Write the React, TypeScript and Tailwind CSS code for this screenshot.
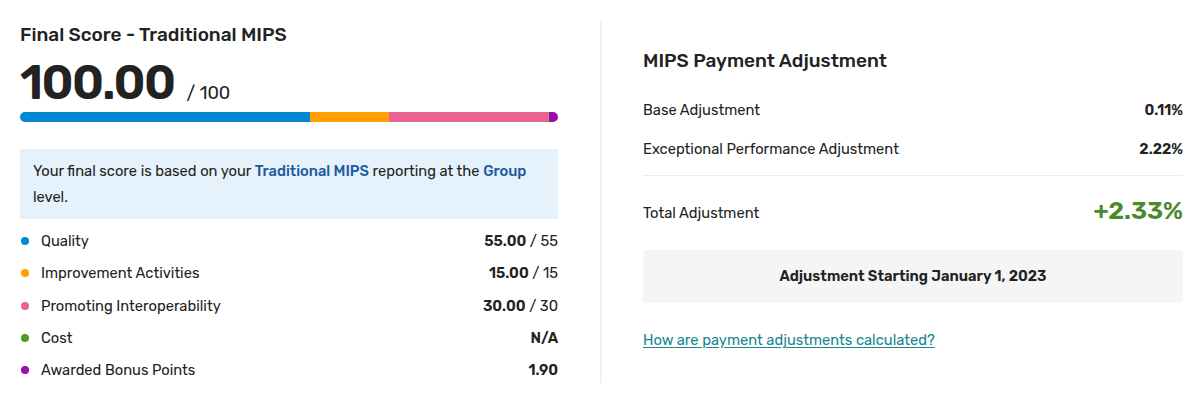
const font = "font-['Rubik','Inter','Noto_Sans',sans-serif]";

type Row = { label: string; dot: string; score: string; max?: string };

const rows: Row[] = [
  { label: "Quality", dot: "bg-[#0288d1]", score: "55.00", max: "55" },
  { label: "Improvement Activities", dot: "bg-[#ffa000]", score: "15.00", max: "15" },
  { label: "Promoting Interoperability", dot: "bg-[#ea6192]", score: "30.00", max: "30" },
  { label: "Cost", dot: "bg-[#4e9a2a]", score: "N/A" },
  { label: "Awarded Bonus Points", dot: "bg-[#9c0ab0]", score: "1.90" },
];

function ScoreBar() {
  return (
    <div className="flex h-[10px] w-full overflow-hidden rounded-full">
      <div className="w-[290px] bg-[#0288d1]" />
      <div className="w-[79px] bg-[#ffa000]" />
      <div className="w-[159px] bg-[#ea6192]" />
      <div className="w-px bg-[#7fae6a]" />
      <div className="flex-1 bg-[#9c0ab0]" />
    </div>
  );
}

export default function App() {
  return (
    <div className={`${font} flex bg-white py-5 text-[#222]`}>
      <section className="w-[602px] border-r-2 border-[#f2f2f2] pl-5 pr-[42px]">
        <h2 className="mt-[3px] text-[19px] font-medium leading-6">Final Score - Traditional MIPS</h2>
        <div className="mt-[11px] flex items-baseline gap-3">
          <span className="text-[48px] font-semibold leading-[50px] tracking-[-1.5px]">100.00</span>
          <span className="text-[18px]">/ 100</span>
        </div>
        <div className="mt-[4px]">
          <ScoreBar />
        </div>
        <div className="mt-[27px] bg-[#e5f2fb] px-[13px] py-[9px] text-[14.7px] leading-[26px]">
          Your final score is based on your{" "}
          <span className="font-medium text-[#1b5aa0]">Traditional MIPS</span> reporting at the{" "}
          <span className="font-medium text-[#1b5aa0]">Group</span> level.
        </div>
        <ul className="mt-[9px] flex flex-col gap-[6.3px]">
          {rows.map((r) => (
            <li key={r.label} className="flex h-[26px] items-center text-[14.7px]">
              <span className={`ml-[1px] h-[8px] w-[8px] rounded-full ${r.dot}`} />
              <span className="ml-[12px] flex-1">{r.label}</span>
              <span>
                <span className="font-semibold">{r.score}</span>
                {r.max && <span> / {r.max}</span>}
              </span>
            </li>
          ))}
        </ul>
      </section>

      <section className="flex-1 pl-[41px] pr-[17px] pt-[29px]">
        <h2 className="text-[19px] font-medium leading-6">MIPS Payment Adjustment</h2>
        <div className="mt-[18px] flex h-[39px] items-center justify-between text-[14.7px]">
          <span>Base Adjustment</span>
          <span className="font-semibold">0.11%</span>
        </div>
        <div className="flex h-[39px] items-center justify-between text-[14.7px]">
          <span>Exceptional Performance Adjustment</span>
          <span className="font-semibold">2.22%</span>
        </div>
        <div className="mt-[6px] border-t border-[#ececec]" />
        <div className="flex h-[70px] items-center justify-between">
          <span className="mt-[4px] text-[14.7px]">Total Adjustment</span>
          <span className="text-[25px] font-semibold text-[#4a8a2c]">+2.33%</span>
        </div>
        <div className="mt-[4px] flex h-[53px] items-center justify-center rounded bg-[#f5f5f5] text-[14.7px] font-semibold">
          Adjustment Starting January 1, 2023
        </div>
        <a href="#" className="mt-[26px] inline-block text-[14.7px] text-[#17868f] underline underline-offset-2">
          How are payment adjustments calculated?
        </a>
      </section>
    </div>
  );
}
